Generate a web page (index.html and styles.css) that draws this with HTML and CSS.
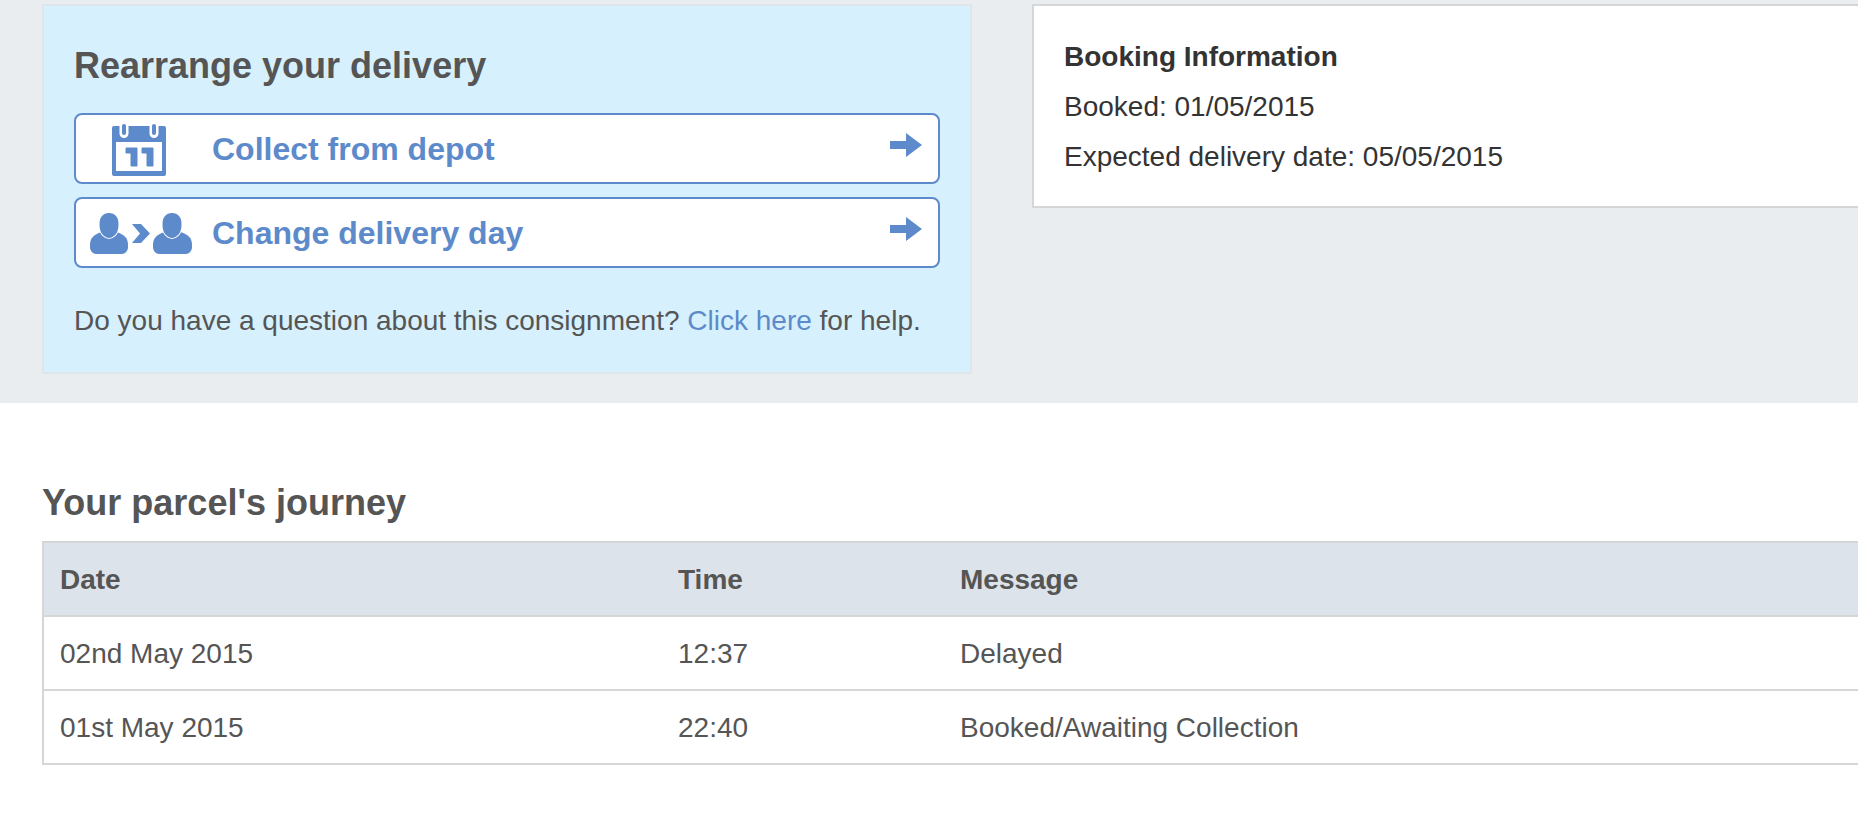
FILE: index.html
```html
<!DOCTYPE html>
<html lang="en">
<head>
<meta charset="utf-8">
<title>Track your parcel</title>
<link rel="stylesheet" href="styles.css">
</head>
<body>
<section class="top">
  <div class="panel">
    <h2 class="panel-title">Rearrange your delivery</h2>
    <a class="action" href="#">
      <svg class="icon icon-cal" width="54" height="52" viewBox="0 0 54 52"><rect x="0" y="2" width="54" height="50" rx="2" fill="#5d8aca"/><rect x="4" y="18" width="46" height="29" fill="#fff"/><rect x="7.500" y="-2" width="9" height="16" rx="4.500" fill="#fff"/><rect x="37.500" y="-2" width="9" height="16" rx="4.500" fill="#fff"/><rect x="10" y="0" width="4" height="11" rx="2" fill="#5d8aca"/><rect x="40" y="0" width="4" height="11" rx="2" fill="#5d8aca"/><path fill="#5d8aca" stroke="#5d8aca" stroke-width="1" stroke-linejoin="round" d="M14 24h11v18h-6V29h-5zM30 24h11v18h-6V29h-5z"/></svg>
      <span class="action-label">Collect from depot</span>
      <svg class="arrow" width="32" height="24" viewBox="0 0 32 24"><path fill="#5d8aca" d="M0 8h16V0l16 12-16 12v-8H0z"/></svg>
    </a>
    <a class="action" href="#">
      <svg class="icon icon-people" width="102" height="42" viewBox="0 0 102 42"><path fill="#5d8aca" d="M12 19C4 21 0 25 0 32v2c0 4 3 7 6 7h26c3 0 6-3 6-7v-2c0-7-4-11-12-13z"/><path class="halo" fill="#5d8aca" stroke="#fff" stroke-width="2" d="M19 0c6 0 9.500 4 9.500 11 0 6-1.500 9-3.500 11-2 2-4 3-6 3s-4-1-6-3c-2-2-3.500-5-3.500-11 0-7 3.500-11 9.500-11z"/><path fill="#5d8aca" d="M42 11h9l9 9.500-9 9.500h-9l8-9.500z"/><path fill="#5d8aca" d="M75 19c-8 2-12 6-12 13v2c0 4 3 7 6 7h27c3 0 6-3 6-7v-2c0-7-4-11-12-13z"/><path class="halo" fill="#5d8aca" stroke="#fff" stroke-width="2" d="M82 0c6 0 9.500 4 9.500 11 0 6-1.500 9-3.500 11-2 2-4 3-6 3s-4-1-6-3c-2-2-3.500-5-3.500-11 0-7 3.500-11 9.500-11z"/></svg>
      <span class="action-label">Change delivery day</span>
      <svg class="arrow" width="32" height="24" viewBox="0 0 32 24"><path fill="#5d8aca" d="M0 8h16V0l16 12-16 12v-8H0z"/></svg>
    </a>
    <p class="help">Do you have a question about this consignment? <a class="help-link" href="#">Click here</a> for help.</p>
  </div>
  <div class="card">
    <h3 class="card-title">Booking Information</h3>
    <p class="card-line">Booked: 01/05/2015</p>
    <p class="card-line">Expected delivery date: 05/05/2015</p>
  </div>
</section>
<section class="journey">
  <h2 class="journey-title">Your parcel's journey</h2>
  <table class="events">
    <thead>
      <tr><th class="col-date">Date</th><th class="col-time">Time</th><th>Message</th></tr>
    </thead>
    <tbody>
      <tr><td>02nd May 2015</td><td>12:37</td><td>Delayed</td></tr>
      <tr><td>01st May 2015</td><td>22:40</td><td>Booked/Awaiting Collection</td></tr>
    </tbody>
  </table>
</section>
</body>
</html>
```
FILE: styles.css
```css
html, body {
  margin: 0;
  padding: 0;
  height: 838px;
  overflow: hidden;
  background: #fff;
}
body {
  width: 1858px;
  font-family: "Liberation Sans", Arial, sans-serif;
  font-size: 28px;
  color: #555;
}
.top {
  display: flex;
  align-items: flex-start;
  gap: 60px;
  height: 403px;
  box-sizing: border-box;
  padding: 4px 0 0 42px;
  background: #e9edf0;
}
.panel {
  flex: none;
  width: 930px;
  height: 370px;
  box-sizing: border-box;
  padding: 0 30px;
  background: #d7f0fd;
  border: 2px solid #dfe6ea;
}
.panel-title {
  margin: 35px 0 22px;
  font-size: 36px;
  line-height: 50px;
  font-weight: bold;
  color: #555;
}
.action {
  display: flex;
  align-items: center;
  height: 71px;
  box-sizing: border-box;
  margin-bottom: 13px;
  background: #fff;
  border: 2px solid #5d8aca;
  border-radius: 8px;
  text-decoration: none;
  color: #5d8aca;
}
.icon {
  flex: none;
  filter: blur(0.7px);
}
.halo {
  paint-order: stroke;
}
.icon-cal {
  margin: 3px 46px 0 36px;
}
.icon-people {
  margin: 2px 20px 0 14px;
}
.action-label {
  font-size: 32px;
  font-weight: bold;
  line-height: 40px;
}
.arrow {
  flex: none;
  margin: -8px 16px 0 auto;
}
.help {
  margin: 33px 0 0;
  font-size: 28px;
  line-height: 40px;
  color: #555;
}
.help-link {
  color: #5d8aca;
  text-decoration: none;
}
.card {
  flex: none;
  width: 1000px;
  height: 204px;
  box-sizing: border-box;
  padding: 31px 30px;
  background: #fff;
  border: 2px solid #d6d6d6;
  color: #333;
}
.card-title {
  margin: 0 0 10px;
  font-size: 28px;
  line-height: 40px;
  font-weight: bold;
  color: #333;
}
.card-line {
  margin: 0 0 10px;
  line-height: 40px;
}
.journey {
  padding: 75px 0 0 42px;
}
.journey-title {
  margin: 0 0 13px;
  font-size: 36px;
  line-height: 50px;
  font-weight: bold;
  color: #555;
}
.events {
  width: 1900px;
  border-collapse: collapse;
  border: 2px solid #d6d6d6;
  table-layout: fixed;
}
.events th,
.events td {
  height: 71px;
  padding: 1px 16px 0;
  text-align: left;
  font-size: 28px;
  border-bottom: 2px solid #d6d6d6;
}
.events th {
  background: #dde3ea;
  font-weight: bold;
  color: #555;
}
.col-date {
  width: 586px;
}
.col-time {
  width: 250px;
}
```
